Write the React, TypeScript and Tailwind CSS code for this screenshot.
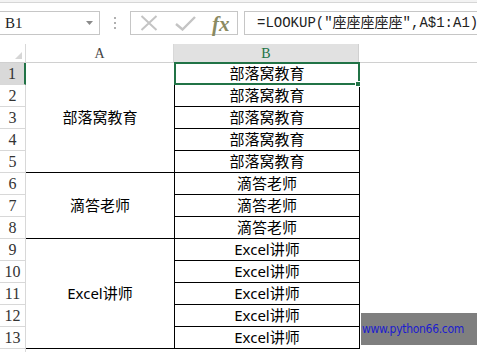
import React from "react";

const rowsB = [
  "部落窝教育","部落窝教育","部落窝教育","部落窝教育","部落窝教育",
  "滴答老师","滴答老师","滴答老师",
  "Excel讲师","Excel讲师","Excel讲师","Excel讲师","Excel讲师",
];

const groupsA = [
  { text: "部落窝教育", rows: 5 },
  { text: "滴答老师", rows: 3 },
  { text: "Excel讲师", rows: 5 },
];

export default function App() {
  const cjk = { fontFamily: '"Noto Sans", "Noto Sans CJK SC", sans-serif' };
  return (
    <div className="relative w-[477px] h-[352px] overflow-hidden bg-white">
      {/* top strip */}
      <div className="h-[3px] bg-[#f3f3f3] border-b border-[#d6d6d6]" />
      {/* formula bar */}
      <div className="flex items-center h-[24px] mt-[8px]">
        <div className="relative flex items-center w-[100px] h-[24px] border border-l-0 border-[#c6c6c6] pl-[5px] text-[15px] text-[#222]" style={{ fontFamily: '"Liberation Serif", serif' }}>
          B1
          <svg className="absolute left-[86px] top-[9px]" width="7" height="4" viewBox="0 0 7 4">
            <path d="M0 0 L7 0 L3.5 4 Z" fill="#8a8a8a" />
          </svg>
        </div>
        <div className="flex flex-col gap-[3px] ml-[14px] w-[2px]">
          <div className="w-[2px] h-[2px] bg-[#b0b0b0]" />
          <div className="w-[2px] h-[2px] bg-[#b0b0b0]" />
          <div className="w-[2px] h-[2px] bg-[#b0b0b0]" />
        </div>
        <div className="relative ml-[14px] w-[108px] h-[24px] border border-[#c6c6c6]">
          <svg className="absolute left-[9px] top-[3px]" width="18" height="16" viewBox="0 0 18 16">
            <path d="M1.5 1 L16.5 15 M16.5 1 L1.5 15" stroke="#c4c4c4" strokeWidth="2" />
          </svg>
          <svg className="absolute left-[44px] top-[4px]" width="21" height="15" viewBox="0 0 21 15">
            <path d="M1 8 L7.5 13.5 L20 1" stroke="#c4c4c4" strokeWidth="2.4" fill="none" />
          </svg>
          <span className="absolute left-[81px] top-[-3px] italic font-bold text-[21px] text-[#8a8a62]" style={{ fontFamily: '"Liberation Serif", serif' }}>
            fx
          </span>
        </div>
        <div className="flex items-center ml-[6px] flex-1 h-[24px] border border-r-0 border-[#c6c6c6] pl-[12px] text-[14px] text-[#222] whitespace-nowrap overflow-hidden" style={{ fontFamily: '"Liberation Mono", "Noto Sans CJK SC", monospace' }}>
          =LOOKUP("座座座座座",A$1:A1)
        </div>
      </div>
      {/* column headers */}
      <div className="flex mt-[9px] h-[19px] border-b border-[#d0d0d0]">
        <div className="relative w-[26px] border-r border-[#d8d8d8]">
          <svg className="absolute right-[3px] bottom-[3px]" width="7" height="7" viewBox="0 0 7 7">
            <path d="M7 0 L7 7 L0 7 Z" fill="#d6d6d6" />
          </svg>
        </div>
        <div className="w-[148px] flex items-center justify-center text-[14px] text-[#444] border-r border-[#d8d8d8]" style={{ fontFamily: '"Liberation Serif", serif' }}>
          A
        </div>
        <div className="w-[185px] flex items-center justify-center text-[14px] text-[#217346] bg-[#e1e1e1] border-r border-[#d0d0d0]" style={{ fontFamily: '"Liberation Serif", serif' }}>
          B
        </div>
        <div className="flex-1" />
      </div>
      {/* body */}
      <div className="flex">
        <div className="flex flex-col w-[26px]">
          {Array.from({ length: 14 }).map((_, i) => (
            <div
              key={i}
              className={
                i === 0
                  ? "h-[22px] flex items-center justify-center border-b border-[#d8d8d8] border-r-2 border-r-[#217346] bg-[#d9d9d9] text-[16px] text-[#333]"
                  : "h-[22px] flex items-center justify-center border-b border-r border-[#d8d8d8] text-[16px] text-[#333]"
              }
              style={{ fontFamily: '"Liberation Serif", serif' }}
            >
              {i + 1}
            </div>
          ))}
        </div>
        <div className="flex flex-col w-[149px]">
          {groupsA.map((g, i) => (
            <div
              key={i}
              className={
                g.rows === 5
                  ? "h-[110px] flex items-center justify-center border-b border-r border-black text-[15px] text-black"
                  : "h-[66px] flex items-center justify-center border-b border-r border-black text-[15px] text-black"
              }
              style={cjk}
            >
              {g.text}
            </div>
          ))}
        </div>
        <div className="flex flex-col w-[185px]">
          {rowsB.map((t, i) => (
            <div
              key={i}
              className="h-[22px] flex items-center justify-center border-b border-r border-black text-[15px] text-black"
              style={cjk}
            >
              {t}
            </div>
          ))}
        </div>
        <div className="flex-1" />
      </div>
      {/* selection */}
      <div className="absolute left-[174px] top-[62px] w-[186px] h-[23px] border-2 border-[#217346]" />
      <div className="absolute left-[355px] top-[81px] w-[6px] h-[6px] bg-[#217346] border border-white" />
      {/* watermark */}
      <div className="absolute left-[361px] top-[313px] w-[116px] h-[32px] bg-[#7f7f7f] flex items-center pl-[1px] text-[12px] tracking-[-0.3px] text-[#1c1ccf] whitespace-nowrap" style={{ fontFamily: '"DejaVu Sans Condensed", "DejaVu Sans", sans-serif', fontStretch: "condensed" }}>
        www.python66.com
      </div>
    </div>
  );
}
